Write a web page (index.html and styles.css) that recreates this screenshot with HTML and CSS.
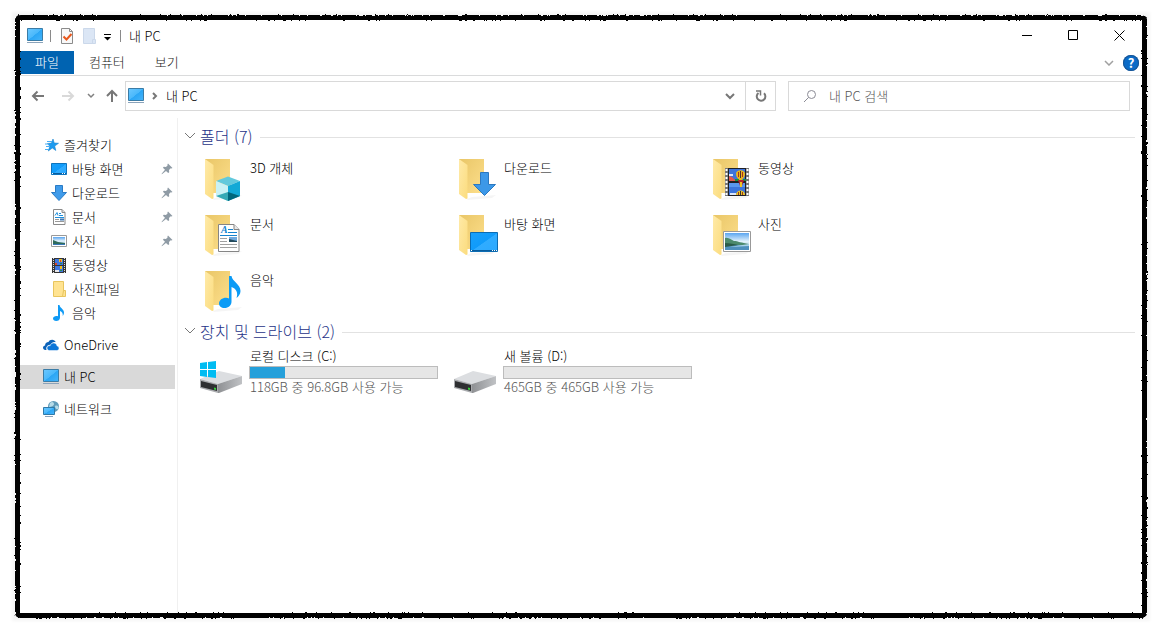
FILE: index.html
```html
<!DOCTYPE html>
<html lang="ko">
<head>
	<meta charset="UTF-8">
	<meta name="viewport" content="width=device-width, initial-scale=1">
	<title>내 PC</title>
	<link rel="stylesheet" href="styles.css">
</head>
<body>

<!-- icon sprite -->
<svg class="sprite" width="0" height="0" aria-hidden="true">
	<defs>
		<linearGradient id="g-screen" x1="0" y1="0" x2="1" y2="1">
			<stop offset="0" stop-color="#6cc8ff"/><stop offset=".5" stop-color="#4ab8fb"/><stop offset=".52" stop-color="#2ba6f5"/><stop offset="1" stop-color="#45b4fa"/>
		</linearGradient>
		<linearGradient id="g-desk" x1="0" y1="0" x2="1" y2="1">
			<stop offset="0" stop-color="#18a0fb"/><stop offset=".5" stop-color="#109bfa"/><stop offset=".52" stop-color="#30acff"/><stop offset="1" stop-color="#2ca9ff"/>
		</linearGradient>
		<linearGradient id="g-back" x1="0" y1="0" x2="1" y2="1">
			<stop offset="0" stop-color="#e9c667"/><stop offset="1" stop-color="#fddf8c"/>
		</linearGradient>
		<linearGradient id="g-flap" x1="0" y1="0" x2="1" y2="1">
			<stop offset="0" stop-color="#ffeaa8"/><stop offset="1" stop-color="#fbdc7e"/>
		</linearGradient>
		<linearGradient id="g-sky" x1="0" y1="0" x2="0" y2="1">
			<stop offset="0" stop-color="#5aa5f0"/><stop offset=".5" stop-color="#e3f2fb"/><stop offset="1" stop-color="#8fc0e0"/>
		</linearGradient>
		<linearGradient id="g-side" x1="0" y1="0" x2="1" y2="0">
			<stop offset="0" stop-color="#8f9194"/><stop offset="1" stop-color="#c0c2c5"/>
		</linearGradient>
		<filter id="rough" x="-2%" y="-2%" width="104%" height="104%">
			<feTurbulence type="fractalNoise" baseFrequency=".4" numOctaves="2" seed="4"/>
			<feDisplacementMap in="SourceGraphic" scale="3" xChannelSelector="R" yChannelSelector="G"/>
		</filter>
	</defs>

	<symbol id="pc" viewBox="0 0 16 16">
		<path d="M.5.500h15v12h-15z" fill="url(#g-screen)" stroke="#3b7ca6"/>
		<path d="M0 14.500h16" stroke="#8ba3ba"/>
	</symbol>
	<symbol id="star" viewBox="0 0 16 16">
		<path d="M10 2l1.200 4 4.300.3-3.800 2.700 1.100 4.500-3.500-2.500-4 3 1.500-4.700L4.500 6.500l4-.4z" fill="#1d9bf0" stroke="#1583cf" stroke-width=".6"/>
		<path d="M4 4.500h5M2 7h4M3 9.500h4M2 12.500h4" stroke="#4aaef3"/>
	</symbol>
	<symbol id="desktop" viewBox="0 0 16 16">
		<path d="M.5 2.500h15v11h-15z" fill="url(#g-desk)" stroke="#0e74bd"/>
		<path d="M1 12.500h14" stroke="#075b9c"/>
		<path d="M1 12.500h1M11 12.500h1M13 12.500h1" stroke="#fff"/>
	</symbol>
	<symbol id="down" viewBox="0 0 16 16">
		<path d="M4.500.500h7v7h4L8 15.500.500 7.500h4z" fill="#3f9bea" stroke="#2b7bc5"/>
	</symbol>
	<symbol id="doc" viewBox="0 0 16 16">
		<path d="M2.500.500h8.500l3 3v12H2.500z" fill="#fff" stroke="#8a8a8a"/>
		<path d="M11 .5v3h3" fill="#ddd" stroke="#8a8a8a"/>
		<path d="M4 6.500l2-3 1 3M8 4.500h2M8 6.500h4M4 8.500h9" fill="none" stroke="#1e8fdc"/>
		<path d="M4 10.500h4M4 12.500h9" stroke="#999"/>
		<path d="M9 9.500h4v2H9z" fill="#3f78b5"/>
	</symbol>
	<symbol id="photo" viewBox="0 0 16 16">
		<path d="M.5 2.500h15v11h-15z" fill="#fff" stroke="#9a9a9a"/>
		<path d="M2 4h12v8H2z" fill="url(#g-sky)"/>
		<path d="M2 7l5 2 7 1v1H2z" fill="#2f6b5c"/>
		<path d="M2 11h12v1H2z" fill="#3a78b8"/>
	</symbol>
	<symbol id="film" viewBox="0 0 16 16">
		<path d="M1 1h14v15H1z" fill="#353535"/>
		<path d="M2.500 1v15M13.500 1v15" stroke="#ddd" stroke-dasharray="1 1"/>
		<path d="M4 2h8v6H4zM4 9h8v6H4z" fill="#3f78e0"/>
		<path d="M8 2h3v3H8zM9 9h2v3H9z" fill="#f0c020"/>
		<path d="M4 6h2v2H4zM9 3h1v2H9z" fill="#d8452c"/>
		<path d="M4 13h4v2H4z" fill="#e6e6ea"/>
		<path d="M9 6h2v1H9zM9 13h2v1H9z" fill="#26884a"/>
	</symbol>
	<symbol id="folder" viewBox="0 0 16 16">
		<path d="M2.500.500h10v15h-10z" fill="#ffe391" stroke="#e8c55e"/>
		<path d="M12.500 9.500h2v6h-3z" fill="#ffe391" stroke="#e8c55e"/>
	</symbol>
	<symbol id="note" viewBox="0 0 16 16">
		<path d="M7 0h1.500c.3 3 4.500 4 4.500 7.500 0 1.500-.6 2.700-1.300 3.500.5-2.600-.7-4.400-2.700-5v6.700C9 14.700 7.300 16 5.200 16 3.400 16 2 15 2 13.500S3.600 11 5.400 11c.6 0 1.100.1 1.600.3z" fill="#0f9af5"/>
	</symbol>
	<symbol id="onedrive" viewBox="0 0 16 16">
		<path d="M3.500 13H2.300C1 13 0 12 0 10.800s.9-2.200 2.100-2.300C2 6.500 3.500 5 5.500 5c.6-1.400 2-2.300 3.600-2.300 1.700 0 3.100 1 3.700 2.500-2.400-.4-4.300.7-5 2.500-2.600-.2-4.500 1.500-4.500 3.700 0 .6.100 1.100.2 1.600z" fill="#0c62b8"/>
		<path d="M6.500 13.500c-1.400 0-2.500-1-2.500-2.400 0-1.500 1.200-2.700 3.200-2.500C7.700 7 9 6 10.600 6c1.800 0 3.200 1.200 3.400 2.900 1.200.2 2 1.100 2 2.300 0 1.300-1 2.300-2.300 2.300z" fill="#0c76d8" stroke="#fff" stroke-width=".5"/>
	</symbol>
	<symbol id="network" viewBox="0 0 16 16">
		<circle cx="10.500" cy="5.500" r="5.500" fill="#5f9bb9"/>
		<path d="M7 2c2-2 4-1 4 1S8 6 6 6zM12 5c2-1 4 0 3.500 2S12 9 12 5z" fill="#b6dbe8"/>
		<path d="M.5 6.500h11v7H.500z" fill="url(#g-screen)" stroke="#2f79a8"/>
		<path d="M2 15.500h8" stroke="#8ba3ba"/>
	</symbol>
	<symbol id="pin" viewBox="0 0 12 12">
		<path d="M7 .5L11.500 5l-1.200.5-.6-.2L8 7l.2 2.200-1 .9-2.200-2.200L1.200 11l-.6.200.2-.7L4 6.800 1.900 4.700l.9-.9L5 4l1.700-1.700-.3-.8z" fill="#8f9ba5"/>
	</symbol>

	<!-- half-open folder behind every library icon -->
	<symbol id="open-folder" viewBox="0 0 48 48">
		<path d="M17 43l5-2 24-2-4 3-24 2z" fill="#000" opacity=".04"/>
		<path d="M9 3h25v34H9z" fill="url(#g-back)"/>
		<path d="M9 3l8.500 6v33.500L16 43l-7-5z" fill="url(#g-flap)"/>
	</symbol>
	<symbol id="big-3d" viewBox="0 0 48 48">
		<use href="#open-folder"/>
		<path d="M32 20.500L44 25l-12 5-12-5z" fill="#62c9dc"/>
		<path d="M20 25l12 5v15l-12-5z" fill="#c9f1f5"/>
		<path d="M44 25l-12 5v15l12-5z" fill="#12a9d6"/>
		<path d="M20 40l12-4v9z" fill="#35a9b5"/>
		<path d="M44 40l-12-4v9z" fill="#00677c"/>
	</symbol>
	<symbol id="big-down" viewBox="0 0 48 48">
		<use href="#open-folder"/>
		<path d="M30.500 16.500h8v12h7L34.500 39.500l-11-11h7z" fill="#3c98e8" stroke="#2b78c0"/>
	</symbol>
	<symbol id="big-film" viewBox="0 0 48 48">
		<use href="#open-folder"/>
		<path d="M21 12h24v28H21z" fill="#777"/>
		<path d="M22.500 13v26M43.500 13v26" stroke="#fff" stroke-width="2" stroke-dasharray="2 2"/>
		<path d="M24 12h18v28H24z" fill="#1f1f24"/>
		<path d="M25 13h16v12H25zM25 27h16v12H25z" fill="#3d74dc"/>
		<path d="M25 27h16v4H25z" fill="#5a96ee"/>
		<path d="M25 20l3 1 4 4h-7z" fill="#e2574c"/><path d="M25 18h4v2h-4zM26 37h6v2h-6z" fill="#dbe6fa"/>
		<path d="M32 18c0-5 9-5 9 0 0 3-2 4-3 6h-3c-1-2-3-3-3-6z" fill="#e8b61e"/>
		<path d="M34.500 16v5M38.500 16v5" stroke="#a8321f"/><path d="M36.500 15v7" stroke="#503030"/>
		<path d="M31 23h4v2h-4zM39 23h3v2h-3z" fill="#1a9146"/>
		<path d="M34 24h6l-2 6h-2z" fill="#b5262b"/><path d="M36 26h2v5h-2z" fill="#edc424"/>
		<path d="M32 39c0-6 9-6 9 0z" fill="#edc424"/><path d="M34.500 36v3M38.500 36v3" stroke="#963822"/><path d="M36.500 35v4" stroke="#333"/>
	</symbol>
	<symbol id="big-doc" viewBox="0 0 48 48">
		<use href="#open-folder"/>
		<path d="M22.500 12.500H38l5 5v22H22.500z" fill="#fff" stroke="#858585"/>
		<path d="M38 12.500v5h5" fill="#e8e8e8" stroke="#858585"/>
		<text class="doc-letter" x="25" y="21">A</text>
		<path d="M32 17.500h5M32 20.500h9M24 23.500h17" stroke="#1583cf"/>
		<path d="M24 26.500h7M24 29.500h7M24 32.500h17M24 35.500h17" stroke="#a0a0a0"/>
		<path d="M33 25h8v5h-8z" fill="#6fa8dc"/><path d="M33 27l8 2v1h-8z" fill="#234a5c"/>
	</symbol>
	<symbol id="big-desktop" viewBox="0 0 48 48">
		<use href="#open-folder"/>
		<path d="M20.500 20.500h27v19h-27z" fill="url(#g-desk)" stroke="#0c6cb3"/>
		<path d="M21 38.500h26" stroke="#075b9c"/>
		<path d="M21 38.500h1M42 38.500h1M44 38.500h1M46 38.500h1" stroke="#fff"/>
	</symbol>
	<symbol id="big-photo" viewBox="0 0 48 48">
		<use href="#open-folder"/>
		<path d="M19.500 19.500h27v20h-27z" fill="#fff" stroke="#999"/>
		<path d="M21 21h24v17H21z" fill="url(#g-sky)"/>
		<path d="M21 26c4-1 6 2 9 3 4 0 7 2 15 3v1H21z" fill="#4c8a6c"/>
		<path d="M21 33h24v5H21z" fill="#4f90bd"/><path d="M25 35l20-3v2z" fill="#a9d2e8"/>
		<path d="M21 31c5 0 9 1 13 2l-13 2z" fill="#2b5b48"/>
	</symbol>
	<symbol id="big-note" viewBox="0 0 48 48">
		<use href="#open-folder"/>
		<path d="M33 8h2.500c.7 5.500 9 8 9 15 0 3-2 5.500-4 7 2-5.500-.500-9.500-5-11v14.500c0 4-3 6.500-7 6.500-3.300 0-5.500-1.800-5.500-4.500 0-3.300 3.300-5.700 7-5.700 1.100 0 2.200.2 3 .6z" fill="#0b9bf6"/>
	</symbol>
	<symbol id="disk" viewBox="0 0 48 48">
		<path d="M4 28l19-8 23 5-24 8z" fill="#dcdee1"/>
		<path d="M22 33l24-8v8l-23 9h-1z" fill="url(#g-side)"/>
		<path d="M4 28l18 5v9L4 37z" fill="#a9abae"/>
		<path d="M5 30l16 4v6L5 36z" fill="#2e2f31"/>
		<path d="M18 36.500l2 .5v2l-2-.5z" fill="#35d43a"/>
	</symbol>
	<symbol id="disk-win" viewBox="0 0 48 48">
		<use href="#disk"/>
		<path d="M4 12l7-1v7H4zM12 11l8-1v8h-8zM4 19h7v7l-7-1zM12 19h8v8l-8-1z" fill="#00bcf2"/>
	</symbol>
</svg>

<div class="window">
	<header class="titlebar">
		<svg class="icon"><use href="#pc"/></svg>
		<span class="sep"></span>
		<button class="quick" aria-label="속성">
			<svg class="icon" viewBox="0 0 16 16"><path d="M2.500.500h8l3 3v12h-11z" fill="#f8f8f8" stroke="#8b8b8b"/><path d="M10.500.500v3h3" fill="none" stroke="#8b8b8b"/><path d="M4.500 8.500l3 3 5-5.500" fill="none" stroke="#e8571c" stroke-width="2"/></svg>
		</button>
		<button class="quick" aria-label="새 폴더">
			<svg class="icon" viewBox="0 0 16 16"><path d="M2.500.500h11v15h-11z" fill="#dbe6f5" stroke="#cbd8ea"/><path d="M11.500 11.500h3v4h-3z" fill="#dbe6f5" stroke="#cbd8ea"/></svg>
		</button>
		<button class="quick customize" aria-label="빠른 실행 도구 모음 사용자 지정">
			<svg width="10" height="16" viewBox="0 0 10 16"><path d="M1 6.500h7" stroke="#000"/><path d="M1 9h7l-3.500 3.500z"/></svg>
		</button>
		<span class="sep"></span>
		<h1 class="title">내 PC</h1>
		<div class="controls">
			<button aria-label="최소화"><svg width="11" height="11"><path d="M0 5.500h10" stroke="#000"/></svg></button>
			<button aria-label="최대화"><svg width="11" height="11"><path d="M.5.500h9v9h-9z" fill="none" stroke="#000"/></svg></button>
			<button aria-label="닫기"><svg width="11" height="11"><path d="M.5.500l10 10M10.500.500l-10 10" stroke="#000"/></svg></button>
		</div>
	</header>

	<div class="ribbon">
		<button class="tab tab-file">파일</button>
		<button class="tab">컴퓨터</button>
		<button class="tab">보기</button>
		<div class="ribbon-right">
			<button class="expand" aria-label="리본 확장"><svg width="10" height="6"><path d="M1 1l4 4 4-4" fill="none" stroke="#a0a0a0" stroke-width="1.500"/></svg></button>
			<button class="help" aria-label="도움말">?</button>
		</div>
	</div>

	<div class="toolbar">
		<button class="nav-btn" aria-label="뒤로"><svg width="14" height="12" viewBox="0 0 14 12"><path d="M13 6H2M6.500 1.500L2 6l4.500 4.500" fill="none" stroke="#777" stroke-width="2"/></svg></button>
		<button class="nav-btn" aria-label="앞으로" disabled><svg width="14" height="12" viewBox="0 0 14 12"><path d="M1 6h11M7.500 1.500L12 6l-4.500 4.500" fill="none" stroke="#d9d9d9" stroke-width="2"/></svg></button>
		<button class="nav-btn recent" aria-label="최근 위치"><svg width="8" height="6"><path d="M1 1l3 3 3-3" fill="none" stroke="#808080" stroke-width="1.500"/></svg></button>
		<button class="nav-btn up" aria-label="위로"><svg width="12" height="14" viewBox="0 0 12 14"><path d="M6 13V2M1 7l5-5 5 5" fill="none" stroke="#777" stroke-width="2"/></svg></button>
		<div class="address">
			<svg class="icon"><use href="#pc"/></svg>
			<svg class="crumb-arrow" width="6" height="8"><path d="M1 1l3 3-3 3" fill="none" stroke="#777" stroke-width="2"/></svg>
			<a class="crumb" href="#">내 PC</a>
			<button class="history" aria-label="이전 위치"><svg width="10" height="7"><path d="M1 1l4 4 4-4" fill="none" stroke="#777" stroke-width="2"/></svg></button>
			<button class="refresh" aria-label="새로 고침"><svg width="12" height="12" viewBox="0 0 12 12"><path d="M9 3.300A4.300 4.300 0 1 1 3.500 3" fill="none" stroke="#777" stroke-width="2"/><path d="M1 1h4.500v4.500" fill="none" stroke="#777" stroke-width="1.500"/></svg></button>
		</div>
		<label class="search">
			<svg width="14" height="14" viewBox="0 0 14 14"><circle cx="8.500" cy="5.500" r="4" fill="none" stroke="#8b8b95"/><path d="M5.500 8.500L1 13" stroke="#8b8b95"/></svg>
			<input type="search" placeholder="내 PC 검색" aria-label="내 PC 검색">
		</label>
	</div>

	<div class="main">
		<nav class="sidebar">
			<ul>
				<li><a class="root" href="#"><svg class="icon"><use href="#star"/></svg>즐겨찾기</a></li>
				<li><a href="#"><svg class="icon"><use href="#desktop"/></svg>바탕 화면<svg class="pin"><use href="#pin"/></svg></a></li>
				<li><a href="#"><svg class="icon"><use href="#down"/></svg>다운로드<svg class="pin"><use href="#pin"/></svg></a></li>
				<li><a href="#"><svg class="icon"><use href="#doc"/></svg>문서<svg class="pin"><use href="#pin"/></svg></a></li>
				<li><a href="#"><svg class="icon"><use href="#photo"/></svg>사진<svg class="pin"><use href="#pin"/></svg></a></li>
				<li><a href="#"><svg class="icon"><use href="#film"/></svg>동영상</a></li>
				<li><a href="#"><svg class="icon"><use href="#folder"/></svg>사진파일</a></li>
				<li><a href="#"><svg class="icon"><use href="#note"/></svg>음악</a></li>
			</ul>
			<a class="root" href="#"><svg class="icon"><use href="#onedrive"/></svg>OneDrive</a>
			<a class="root selected" href="#"><svg class="icon"><use href="#pc"/></svg>내 PC</a>
			<a class="root" href="#"><svg class="icon"><use href="#network"/></svg>네트워크</a>
		</nav>

		<main class="content">
			<section>
				<h2 class="group"><button><svg width="12" height="8"><path d="M1 1l5 5 5-5" fill="none" stroke="#777"/></svg>폴더 (7)</button></h2>
				<div class="tiles">
					<a class="tile" href="#"><svg class="big"><use href="#big-3d"/></svg><span class="name">3D 개체</span></a>
					<a class="tile" href="#"><svg class="big"><use href="#big-down"/></svg><span class="name">다운로드</span></a>
					<a class="tile" href="#"><svg class="big"><use href="#big-film"/></svg><span class="name">동영상</span></a>
					<a class="tile" href="#"><svg class="big"><use href="#big-doc"/></svg><span class="name">문서</span></a>
					<a class="tile" href="#"><svg class="big"><use href="#big-desktop"/></svg><span class="name">바탕 화면</span></a>
					<a class="tile" href="#"><svg class="big"><use href="#big-photo"/></svg><span class="name">사진</span></a>
					<a class="tile" href="#"><svg class="big"><use href="#big-note"/></svg><span class="name">음악</span></a>
				</div>
			</section>
			<section>
				<h2 class="group"><button><svg width="12" height="8"><path d="M1 1l5 5 5-5" fill="none" stroke="#777"/></svg>장치 및 드라이브 (2)</button></h2>
				<div class="tiles">
					<a class="tile" href="#">
						<svg class="big"><use href="#disk-win"/></svg>
						<span class="drive">
							<span>로컬 디스크 (C:)</span>
							<progress max="118" value="22" aria-label="로컬 디스크 (C:)"></progress>
							<span class="space">118GB 중 96.8GB 사용 가능</span>
						</span>
					</a>
					<a class="tile" href="#">
						<svg class="big"><use href="#disk"/></svg>
						<span class="drive">
							<span>새 볼륨 (D:)</span>
							<progress max="465" value="0" aria-label="새 볼륨 (D:)"></progress>
							<span class="space">465GB 중 465GB 사용 가능</span>
						</span>
					</a>
				</div>
			</section>
		</main>
	</div>
</div>

</body>
</html>
```
FILE: styles.css
```css
* {
    box-sizing: border-box;
}
body {
    margin: 0;
    padding: 20px;
    background: #fff;
    color: #000;
    font: 300 13px/16px "Noto Sans CJK KR", sans-serif;
}
button,
input {
    font: inherit;
    color: inherit;
    border: 0;
    padding: 0;
    background: none;
}
button {
    display: flex;
    align-items: center;
    justify-content: center;
}
a {
    color: inherit;
    text-decoration: none;
}
svg {
    flex: none;
}
.sprite {
    position: absolute;
}
.icon {
    width: 16px;
    height: 16px;
}

/* window with a torn black edge */
.window {
    position: relative;
    display: flex;
    flex-direction: column;
    min-height: calc(100vh - 40px);
    background: #fff;
    box-shadow: 0 0 3px 8px #f5f5f5;
}
.window::before {
    content: "";
    position: absolute;
    inset: -5px;
    border: 5px solid #000;
    border-radius: 5px;
    filter: url(#rough);
    pointer-events: none;
}
.window::after {
    content: "";
    position: absolute;
    inset: -4px;
    border: 4px solid #000;
    border-radius: 3px;
    pointer-events: none;
}

/* title bar */
.titlebar {
    display: flex;
    align-items: center;
    gap: 6px;
    height: 31px;
    padding-left: 7px;
}
.sep {
    width: 1px;
    height: 12px;
    margin: 0 2px 0 1px;
    background: #8a8a8a;
}
.title {
    margin: 0;
    font-size: 13px;
    font-weight: 300;
}
.controls {
    display: flex;
    align-self: stretch;
    margin-left: auto;
}
.controls button {
    width: 46px;
}

/* ribbon */
.ribbon {
    display: flex;
    height: 25px;
    border-bottom: 1px solid #dadbdc;
}
.tab {
    height: 23px;
    padding: 0 15px 1px;
    color: #222;
}
.tab-file {
    background: #0063b1;
    color: #fff;
}
.ribbon-right {
    display: flex;
    align-items: center;
    gap: 9px;
    margin-left: auto;
    padding-right: 3px;
}
.help {
    width: 16px;
    height: 16px;
    border-radius: 50%;
    background: #0b6bc7;
    box-shadow: inset 0 0 0 1px #1a5593;
    color: #fff;
    font-weight: 700;
}

/* address row */
.toolbar {
    display: flex;
    padding: 5px 12px 7px 3px;
}
.nav-btn {
    width: 30px;
}
.recent {
    width: 16px;
}
.up {
    width: 26px;
}
.address,
.search {
    display: flex;
    align-items: center;
    height: 30px;
    border: 1px solid #d9d9d9;
}
.address {
    flex: 1;
    padding-left: 2px;
}
.crumb-arrow {
    margin: 0 8px;
}
.history {
    align-self: stretch;
    width: 30px;
    margin-left: auto;
}
.refresh {
    align-self: stretch;
    width: 30px;
    border-left: 1px solid #d9d9d9;
}
.search {
    flex: 0 1 342px;
    gap: 12px;
    margin-left: 12px;
    padding-left: 14px;
}
.search input {
    flex: 1;
    min-width: 0;
    outline: none;
}
.search input::placeholder {
    color: #555;
}

/* navigation pane */
.main {
    display: flex;
    flex: 1;
}
.sidebar {
    flex: none;
    display: flex;
    flex-direction: column;
    gap: 8px;
    width: 158px;
    padding: 15px 2px 15px 0;
    border-right: 1px solid #f0f0f0;
}
.sidebar ul {
    margin: 0;
    padding: 0;
    list-style: none;
}
.sidebar a {
    display: flex;
    align-items: center;
    gap: 5px;
    height: 24px;
    padding: 0 2px 0 31px;
}
.sidebar .root {
    padding-left: 23px;
}
.sidebar .selected {
    background: #d9d9d9;
}
.pin {
    width: 12px;
    height: 12px;
    margin-left: auto;
}

/* groups and tiles */
.content {
    flex: 1;
    min-width: 0;
    padding: 7px 7px 15px 6px;
}
.group {
    display: flex;
    align-items: center;
    gap: 7px;
    height: 24px;
    margin: 0;
    color: #1e3287;
    font-size: 16px;
    font-weight: 300;
}
.group::after {
    content: "";
    flex: 1;
    height: 1px;
    background: #e2e2e2;
}
.group button {
    gap: 4px;
    padding-bottom: 2px;
}
.tiles {
    display: grid;
    grid-template-columns: repeat(auto-fill, 254px);
    padding: 3px 0 0 12px;
}
.tile {
    display: flex;
    gap: 6px;
    height: 56px;
}
.big {
    width: 48px;
    height: 48px;
    margin-top: 4px;
}
.doc-letter {
    font: italic 700 10px "Liberation Serif", serif;
    fill: #1583cf;
}
.name {
    padding-top: 8px;
}
.drive {
    display: flex;
    flex-direction: column;
    padding-top: 1px;
}
.space {
    color: #555;
}
progress {
    appearance: none;
    display: block;
    width: 189px;
    height: 13px;
    margin: 2px 0 0 -1px;
    border: 1px solid #bcbcbc;
    background: #e6e6e6;
}
progress::-webkit-progress-bar {
    background: #e6e6e6;
}
progress::-webkit-progress-value {
    background: #26a0da;
}
```
